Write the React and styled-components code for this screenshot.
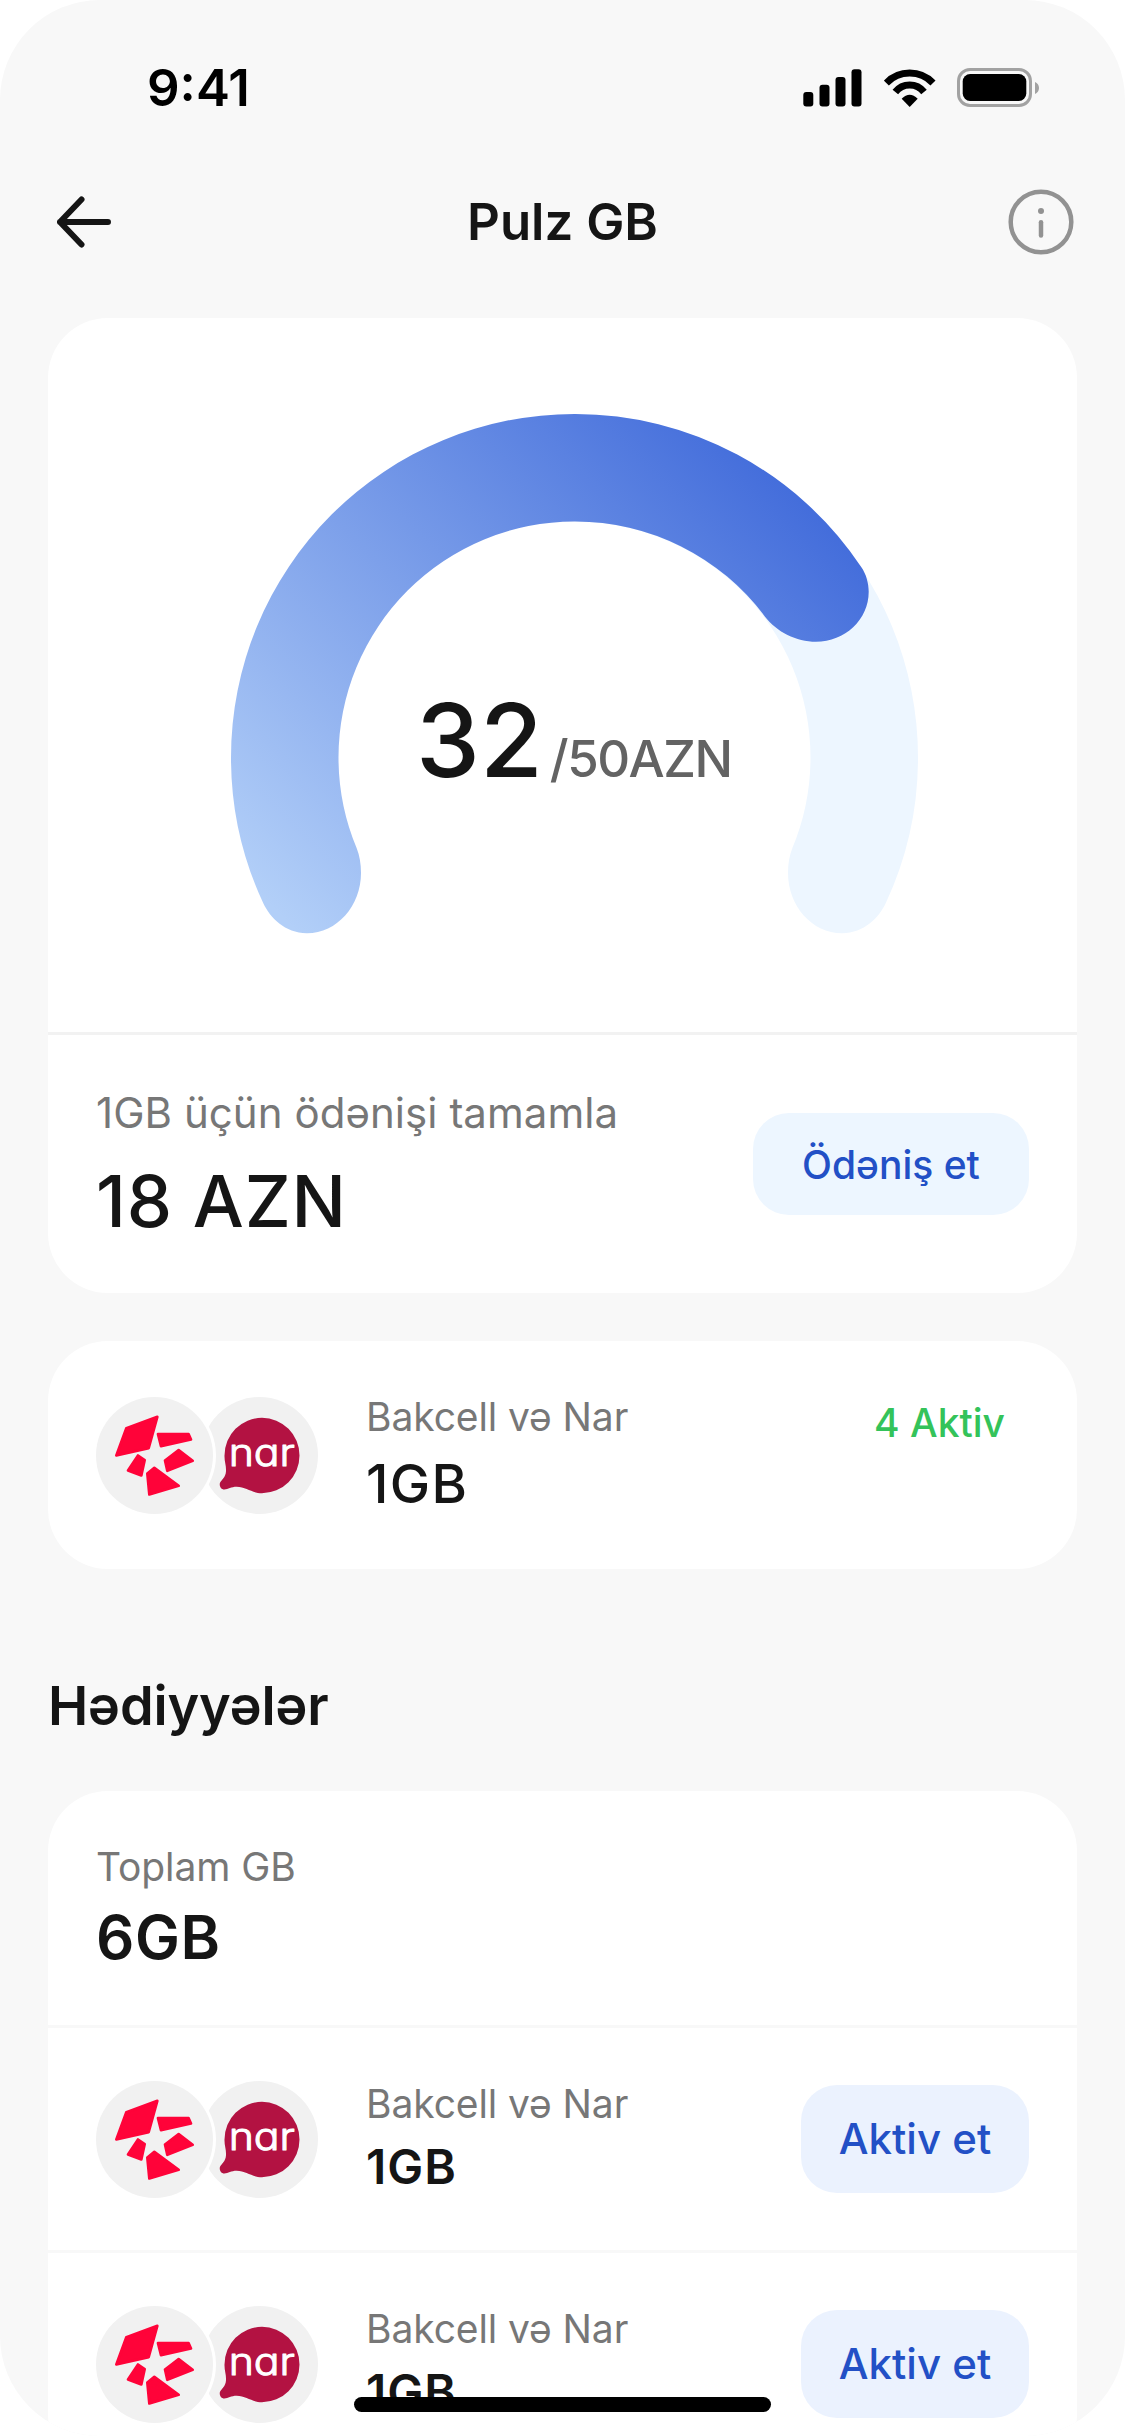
import React from "react";
import styled, { createGlobalStyle } from "styled-components";

const GlobalStyle = createGlobalStyle`
  * { box-sizing: border-box; }
  body { margin: 0; background: #fff; font-family: Inter, "Liberation Sans", sans-serif; color: #151515; }
  button { font: inherit; border: 0; padding: 0; background: none; cursor: pointer; }
  svg { display: block; }
`;

const Screen = styled.div`
  position: relative;
  width: 1125px;
  height: 2436px;
  overflow: hidden;
  border-radius: 100px;
  background: #f8f8f8;
  display: flex;
  flex-direction: column;
`;

const StatusBar = styled.div`
  height: 132px;
  flex: none;
  padding: 44px 86px 0 147px;
  display: flex;
  align-items: center;
  justify-content: space-between;
`;

const Time = styled.span`
  font-size: 51px;
  font-weight: 600;
  line-height: 60px;
  color: #000;
`;

const StatusIcons = styled.div`
  display: flex;
  align-items: center;
`;

const NavBar = styled.header`
  height: 180px;
  flex: none;
  padding: 0 51px 0 57px;
  display: grid;
  grid-template-columns: 66px 1fr 66px;
  align-items: center;
`;

const NavTitle = styled.h1`
  margin: 0;
  text-align: center;
  font-size: 51px;
  font-weight: 600;
  line-height: 66px;
  padding-right: 6px;
`;

const Content = styled.main`
  padding: 6px 48px 0;
  display: flex;
  flex-direction: column;
`;

const Card = styled.section`
  flex: none;
  background: #fff;
  border-radius: 60px;
  margin-bottom: 48px;
`;

const GaugeArea = styled.div`
  display: grid;
  height: 717px;
  border-bottom: 3px solid #f2f2f2;
  & > * { grid-area: 1 / 1; }
`;

const GaugeValue = styled.div`
  display: flex;
  align-items: baseline;
  gap: 7px;
  padding: 356px 0 0 368px;
  z-index: 1;
`;

const Spent = styled.span`
  font-size: 102px;
  font-weight: 500;
  line-height: 132px;
`;

const Goal = styled.span`
  font-size: 51px;
  font-weight: 500;
  letter-spacing: -1.5px;
  color: #636363;
`;

const PayRow = styled.div`
  height: 258px;
  padding: 0 48px;
  display: flex;
  align-items: center;
  justify-content: space-between;
`;

const TextStack = styled.div`
  display: flex;
  flex-direction: column;
  gap: ${(p) => p.$gap || 0}px;
  padding-bottom: ${(p) => p.$lift || 0}px;
`;

const Label = styled.span`
  font-size: ${(p) => p.$size || 39}px;
  line-height: ${(p) => p.$line || 54}px;
  letter-spacing: ${(p) => p.$tracking ?? -0.1}px;
  color: #777;
  white-space: nowrap;
`;

const Value = styled.span`
  font-size: ${(p) => p.$size}px;
  line-height: ${(p) => p.$line}px;
  font-weight: ${(p) => p.$weight || 500};
  letter-spacing: ${(p) => p.$tracking ?? 1}px;
`;

const PillButton = styled.button`
  width: ${(p) => p.$width}px;
  height: ${(p) => p.$height}px;
  padding-bottom: ${(p) => p.$lift || 0}px;
  border-radius: 36px;
  background: ${(p) => p.$bg};
  color: #2250c6;
  font-size: ${(p) => p.$size}px;
  font-weight: 500;
`;

const PackageRow = styled.div`
  height: ${(p) => p.$height || 222}px;
  padding: 0 48px;
  display: flex;
  align-items: center;
`;

const PackageText = styled(TextStack)`
  flex: 1;
  padding-left: 48px;
`;

const ActiveCount = styled.span`
  align-self: flex-start;
  margin: 55px 24px 0 0;
  font-size: 39px;
  font-weight: 500;
  line-height: 54px;
  color: #34c35a;
`;

const Logos = styled.div`
  display: flex;
  flex: none;
`;

const LogoDisc = styled.div`
  width: 117px;
  height: 117px;
  border-radius: 50%;
  background: #f1f1f1;
  margin-left: ${(p) => (p.$front ? 0 : -12)}px;
  box-shadow: ${(p) => (p.$front ? "0 0 0 3px #fff" : "none")};
  z-index: ${(p) => (p.$front ? 1 : 0)};
`;

const SectionTitle = styled.h2`
  margin: 54px 0 48px;
  padding-bottom: 3px;
  font-size: 54px;
  font-weight: 600;
  line-height: 69px;
  letter-spacing: -0.15px;
`;

const TotalBlock = styled.div`
  height: 234px;
  padding: 49px 48px 0;
`;

const Divider = styled.div`
  height: 3px;
  background: #f8f8f8;
`;

const HomeIndicator = styled.div`
  position: absolute;
  left: 354px;
  bottom: 24px;
  width: 417px;
  height: 15px;
  border-radius: 8px;
  background: #000;
  z-index: 2;
`;

const SignalSvg = styled.svg`
  margin-right: 22px;
`;

const BatterySvg = styled.svg`
  margin-left: 21px;
`;

function SignalIcon() {
  return (
    <SignalSvg width="59" height="40" viewBox="0 0 59 40">
      <rect x="0.3" y="24" width="10" height="14.5" rx="3" />
      <rect x="16.5" y="16.7" width="10" height="21.8" rx="3" />
      <rect x="32.5" y="9" width="10" height="29.5" rx="3" />
      <rect x="48.5" y="1.3" width="10" height="37.2" rx="3" />
    </SignalSvg>
  );
}

function WifiIcon() {
  return (
    <svg width="52" height="40" viewBox="312 57 156 120">
      <g fill="none" stroke="#000" strokeWidth="21">
        <path d="M319 102A97 97 0 0 1 459 102" />
        <path d="M346 129A54.5 54.5 0 0 1 432 129" />
      </g>
      <path d="M389 174L365 149Q389 126 413 149Z" />
    </svg>
  );
}

function BatteryIcon() {
  return (
    <BatterySvg width="82" height="40" viewBox="0 0 82 40">
      <rect x="1.5" y="1.5" width="72" height="36" rx="11.5" fill="none" stroke="#a2a2a2" strokeWidth="3" />
      <rect x="5.7" y="6" width="63.6" height="27" rx="7.5" />
      <path d="M78 14v12c2.4-1 4-3.3 4-6s-1.600-5-4-6z" fill="#a2a2a2" />
    </BatterySvg>
  );
}

function BackIcon() {
  return (
    <svg width="54" height="54" viewBox="0 0 54 54" fill="none" stroke="#151515" strokeWidth="6" strokeLinecap="round" strokeLinejoin="round">
      <path d="M51 27H3M24.500 4.500L3 27l21.500 22.500" />
    </svg>
  );
}

function InfoIcon() {
  return (
    <svg width="66" height="66" viewBox="0 0 66 66" fill="none" stroke="#929292" strokeWidth="4.5" strokeLinecap="round">
      <circle cx="33" cy="33" r="30.3" />
      <path d="M33 33.300v13.200" />
      <circle cx="33" cy="22" r="3" fill="#929292" stroke="none" />
    </svg>
  );
}

function Gauge() {
  return (
    <svg width="1029" height="714" viewBox="48 318 1029 714">
      <defs>
        <linearGradient id="progress" gradientUnits="userSpaceOnUse" x1="257" y1="892" x2="742" y2="407">
          <stop offset="0" stopColor="#b2cff8" />
          <stop offset="1" stopColor="#406ada" />
        </linearGradient>
      </defs>
      <path
        fill="#edf6ff"
        d="M574.500 414A343.500 343.500 0 0 1 918 757.500A343.500 343.500 0 0 1 885.700 903.300C879 917.500 864 933.300 842 933.200C812 933.200 788 906 788 873C788 864 789.500 855 792.300 848.300A236 236 0 0 0 810.500 757.500A236 236 0 0 0 574.500 521.500Z"
      />
      <path
        fill="url(#progress)"
        d="M263.300 903.300A343.500 343.500 0 0 1 231 757.500A343.500 343.500 0 0 1 574.500 414A343.500 343.500 0 0 1 861.400 567.300C866 574 868.700 583 868.700 591.700C868.700 619.500 845 641.700 816 641.700C796 641.700 777 632 765 616.700A236 236 0 0 0 574.500 521.500A236 236 0 0 0 338.500 757.500A236 236 0 0 0 356.700 848.300C359.500 855 361 864 361 873C361 906 337 933.200 307 933.200C285 933.300 270 917.500 263.300 903.300Z"
      />
    </svg>
  );
}

const NarText = styled.text`
  font-family: Inter, sans-serif;
  font-size: 112px;
  font-weight: 300;
  font-feature-settings: "cv11" 1;
  fill: #fff;
  stroke: #fff;
  stroke-width: 3px;
  stroke-linejoin: round;
`;

function OperatorLogos() {
  return (
    <Logos>
      <LogoDisc $front>
        <svg width="117" height="117" viewBox="48 49.5 351 351">
          <g fill="#ff0339" stroke="#ff0339" strokeWidth="8" strokeLinejoin="round">
            <path d="M139 143L232 109L206 203L109 225Z" />
            <path d="M234 161L326 161L333 177L243 197Z" />
            <path d="M296 209L338 241L262 271L255 240Z" />
            <path d="M174 225L194 239L184 285L144 270Z" />
            <path d="M223 262L296 316L208 342L202 279Z" />
          </g>
        </svg>
      </LogoDisc>
      <LogoDisc>
        <svg width="117" height="117" viewBox="362 49.5 351 351">
          <path
            fill="#b31242"
            d="M545 112A112.500 113 0 1 1 545 338C515 338 498 320 469 319C452 319 444 327 432 327C422 327 416 316 419 307C423 298 436 291 437 272C438 255 432 244 432.500 225A112.500 113 0 0 1 545 112Z"
          />
          <NarText x="445" y="257" textLength="199" lengthAdjust="spacingAndGlyphs">nar</NarText>
        </svg>
      </LogoDisc>
    </Logos>
  );
}

function GiftRow() {
  return (
    <>
      <Divider />
      <PackageRow>
        <OperatorLogos />
        <PackageText $gap={6} $lift={4}>
          <Label>Bakcell və Nar</Label>
          <Value $size={48} $line={60} $weight={600}>1GB</Value>
        </PackageText>
        <PillButton $width={228} $height={108} $bg="#ebf2fe" $size={42} $lift={2}>Aktiv et</PillButton>
      </PackageRow>
    </>
  );
}

export default function App() {
  return (
    <>
      <GlobalStyle />
      <Screen>
        <StatusBar>
          <Time>9:41</Time>
          <StatusIcons>
            <SignalIcon />
            <WifiIcon />
            <BatteryIcon />
          </StatusIcons>
        </StatusBar>
        <NavBar>
          <BackIcon />
          <NavTitle>Pulz GB</NavTitle>
          <InfoIcon />
        </NavBar>
        <Content>
          <Card>
            <GaugeArea>
              <Gauge />
              <GaugeValue>
                <Spent>32</Spent>
                <Goal>/50AZN</Goal>
              </GaugeValue>
            </GaugeArea>
            <PayRow>
              <TextStack $gap={14} $lift={2}>
                <Label $size={42} $line={60} $tracking={0.05}>1GB üçün ödənişi tamamla</Label>
                <Value $size={72} $line={87} $tracking={0.8}>18 AZN</Value>
              </TextStack>
              <PillButton $width={276} $height={102} $bg="#edf6ff" $size={39}>Ödəniş et</PillButton>
            </PayRow>
          </Card>
          <Card>
            <PackageRow $height={228}>
              <OperatorLogos />
              <PackageText $gap={7} $lift={3}>
                <Label>Bakcell və Nar</Label>
                <Value $size={54} $line={66} $tracking={1.3}>1GB</Value>
              </PackageText>
              <ActiveCount>4 Aktiv</ActiveCount>
            </PackageRow>
          </Card>
          <SectionTitle>Hədiyyələr</SectionTitle>
          <Card>
            <TotalBlock>
              <TextStack $gap={7}>
                <Label>Toplam GB</Label>
                <Value $size={60} $line={72} $weight={600} $tracking={0.6}>6GB</Value>
              </TextStack>
            </TotalBlock>
            <GiftRow />
            <GiftRow />
          </Card>
        </Content>
        <HomeIndicator />
      </Screen>
    </>
  );
}
